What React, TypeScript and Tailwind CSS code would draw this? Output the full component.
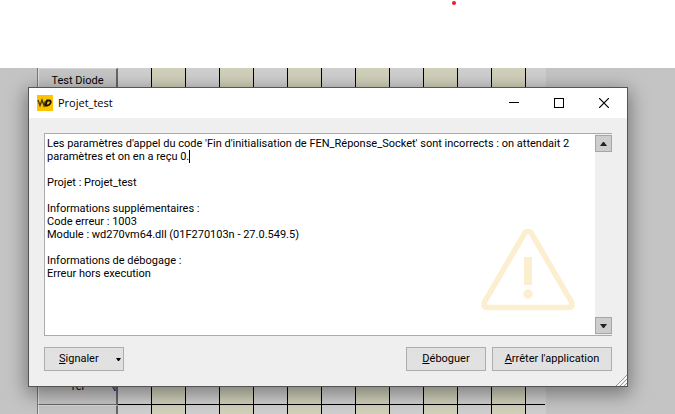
import React from "react";

const columns = Array.from({ length: 13 }, (_, i) => i);

const message = `Les paramètres d'appel du code 'Fin d'initialisation de FEN_Réponse_Socket' sont incorrects : on attendait 2 paramètres et on en a reçu 0.

Projet : Projet_test

Informations supplémentaires :
Code erreur : 1003
Module : wd270vm64.dll (01F270103n - 27.0.549.5)

Informations de débogage :
Erreur hors execution`;

function GridRow({ label, className, marker = false }: { label: string; className: string; marker?: boolean }) {
  return (
    <div className={`flex shrink-0 border-black ${className}`}>
      <div className="relative flex w-20 shrink-0 justify-center border border-t-[#d8d8d8] border-r-2 border-r-[#666] border-b-[#666] border-l-[#e2e2e2] bg-[#c5c5c5] pt-1.5 text-[11px] leading-3 text-black">
        {label}
        {marker && (
          <svg className="absolute top-2 right-0 h-2 w-2" viewBox="0 0 8 8" aria-hidden="true">
            <path d="M1 1L4 3L7 8V4L3 1M4 0L7 3" fill="none" stroke="#20209a" strokeWidth="1" />
          </svg>
        )}
      </div>
      <div className="flex min-w-0 flex-1 overflow-hidden border-b border-inherit">
        {columns.map((i) => (
          <div
            key={i}
            className={`w-[34px] shrink-0 border-r border-black ${i % 2 ? "bg-[#d0d0bb]" : "bg-[#cfcfcf]"}`}
          />
        ))}
      </div>
    </div>
  );
}

const buttonStyle = "h-6 border border-[#adadad] bg-[#e1e1e1] text-[11px] text-black";

function ScrollButton({ up = false }: { up?: boolean }) {
  return (
    <button
      aria-label={up ? "Défiler vers le haut" : "Défiler vers le bas"}
      className="flex h-[17px] w-[17px] items-center justify-center border border-[#a6a6a6] bg-[#cdcdcd]"
    >
      <svg width="7" height="4" viewBox="0 0 7 4" aria-hidden="true">
        <path d={up ? "M0 4L3 0H4L7 4Z" : "M0 0H7L4 4H3Z"} fill="#222" />
      </svg>
    </button>
  );
}

function Dialog() {
  return (
    <section
      role="dialog"
      aria-labelledby="title"
      className="absolute top-[19px] right-[47px] left-7 border border-[#555] bg-[#efefef] shadow-[0_5px_18px_2px_rgba(0,0,0,0.4)]"
    >
      <header className="flex h-[30px] items-center bg-white pl-2">
        <svg width="16" height="16" viewBox="0 0 16 16" aria-hidden="true">
          <rect width="16" height="16" fill="#fdc300" />
          <path d="M1 5L3 10.500L5 5L7 10.500L8.500 6" fill="none" stroke="#4a3c08" strokeWidth="1.400" />
          <path d="M10 5.500H12Q14.500 5.500 13.500 8Q12.500 10.500 10 10.500H8.500Z" fill="none" stroke="#171200" strokeWidth="1.800" />
        </svg>
        <h1 id="title" className="ml-[5px] flex-1 font-['Open_Sans','Noto_Sans',sans-serif] text-[11px] leading-4 text-black">
          Projet_test
        </h1>
        <button aria-label="Réduire" className="flex h-full w-[45px] items-center justify-center">
          <svg width="10" height="10" viewBox="0 0 10 10" aria-hidden="true">
            <path d="M0 4.500H10" stroke="#000" />
          </svg>
        </button>
        <button aria-label="Agrandir" className="flex h-full w-[45px] items-center justify-center">
          <svg width="10" height="10" viewBox="0 0 10 10" aria-hidden="true">
            <rect x="0.5" y="0.5" width="9" height="9" fill="none" stroke="#000" />
          </svg>
        </button>
        <button aria-label="Fermer" className="flex h-full w-[46px] items-center justify-center">
          <svg width="10" height="10" viewBox="0 0 10 10" aria-hidden="true">
            <path d="M0 0L10 10M10 0L0 10" stroke="#000" strokeWidth="1.2" />
          </svg>
        </button>
      </header>

      <div className="p-[15px]">
        <div className="relative flex h-[203px] border border-[#ababab] bg-white">
          <svg className="absolute right-9 bottom-6" width="94" height="82" viewBox="0 0 94 82" aria-hidden="true">
            <path
              d="M43.500 4.500Q47 0 50.500 4.500L90.500 73Q92 78.500 88 78.500H6Q2 78.500 3.500 73Z"
              fill="none"
              stroke="#fcefd0"
              strokeWidth="5.500"
              strokeLinejoin="round"
            />
            <rect x="43" y="28" width="8" height="28" fill="#fcefd0" />
            <circle cx="47" cy="65" r="4.700" fill="#fcefd0" />
          </svg>
          <textarea
            aria-label="Message d'erreur"
            readOnly
            defaultValue={message}
            className="relative block min-w-0 flex-1 resize-none overflow-hidden bg-transparent py-[3px] pr-6 pl-0.5 text-[11px] leading-[13px] text-black outline-none"
          />
          <span className="absolute top-4 left-36 h-[13px] w-px bg-black" />
          <div className="-mr-px flex w-[17px] flex-col justify-between bg-[#efefef] py-px">
            <ScrollButton up />
            <ScrollButton />
          </div>
        </div>

        <div className="mt-[11px] flex items-center gap-1.5">
          <button className={`${buttonStyle} mr-auto flex w-20 items-center justify-between pr-0.5 pl-3.5`}>
            <span>
              <u>S</u>ignaler
            </span>
            <svg width="5" height="3" viewBox="0 0 5 3" aria-hidden="true">
              <path d="M0 0H5L3 3H2Z" fill="#000" />
            </svg>
          </button>
          <button className={`${buttonStyle} w-20`}>
            <u>D</u>éboguer
          </button>
          <button className={`${buttonStyle} w-[120px]`}>
            <u>A</u>rrêter l'application
          </button>
        </div>
      </div>
      <svg className="absolute right-0 bottom-0" width="11" height="11" viewBox="0 0 11 11" aria-hidden="true">
        <path d="M0 11L11 0M4 11L11 4M8 11L11 8" stroke="#999" />
        <path d="M2 11L11 2M6 11L11 6" stroke="#fff" />
      </svg>
    </section>
  );
}

export default function App() {
  return (
    <main className="flex h-screen flex-col overflow-hidden bg-white font-[Roboto,'Liberation_Sans',sans-serif]">
      <div className="relative h-[68px] shrink-0">
        <span className="absolute top-px left-[452px] h-1 w-1 rounded-full bg-[#ed1c24]" />
      </div>
      <div className="relative min-h-0 flex-1 overflow-hidden bg-[#c4c4c4] pr-[129px] pl-[37px]">
        <div className="flex h-full flex-col border-r border-l border-r-[#cecece] border-l-[#777]">
          <GridRow label="Test Diode" className="h-5" />
          <GridRow label="" className="flex-1" />
          <GridRow label="Ter" className="h-[31px]" marker />
          <GridRow label="" className="-mb-5 h-[29px]" />
        </div>
        <Dialog />
      </div>
    </main>
  );
}
